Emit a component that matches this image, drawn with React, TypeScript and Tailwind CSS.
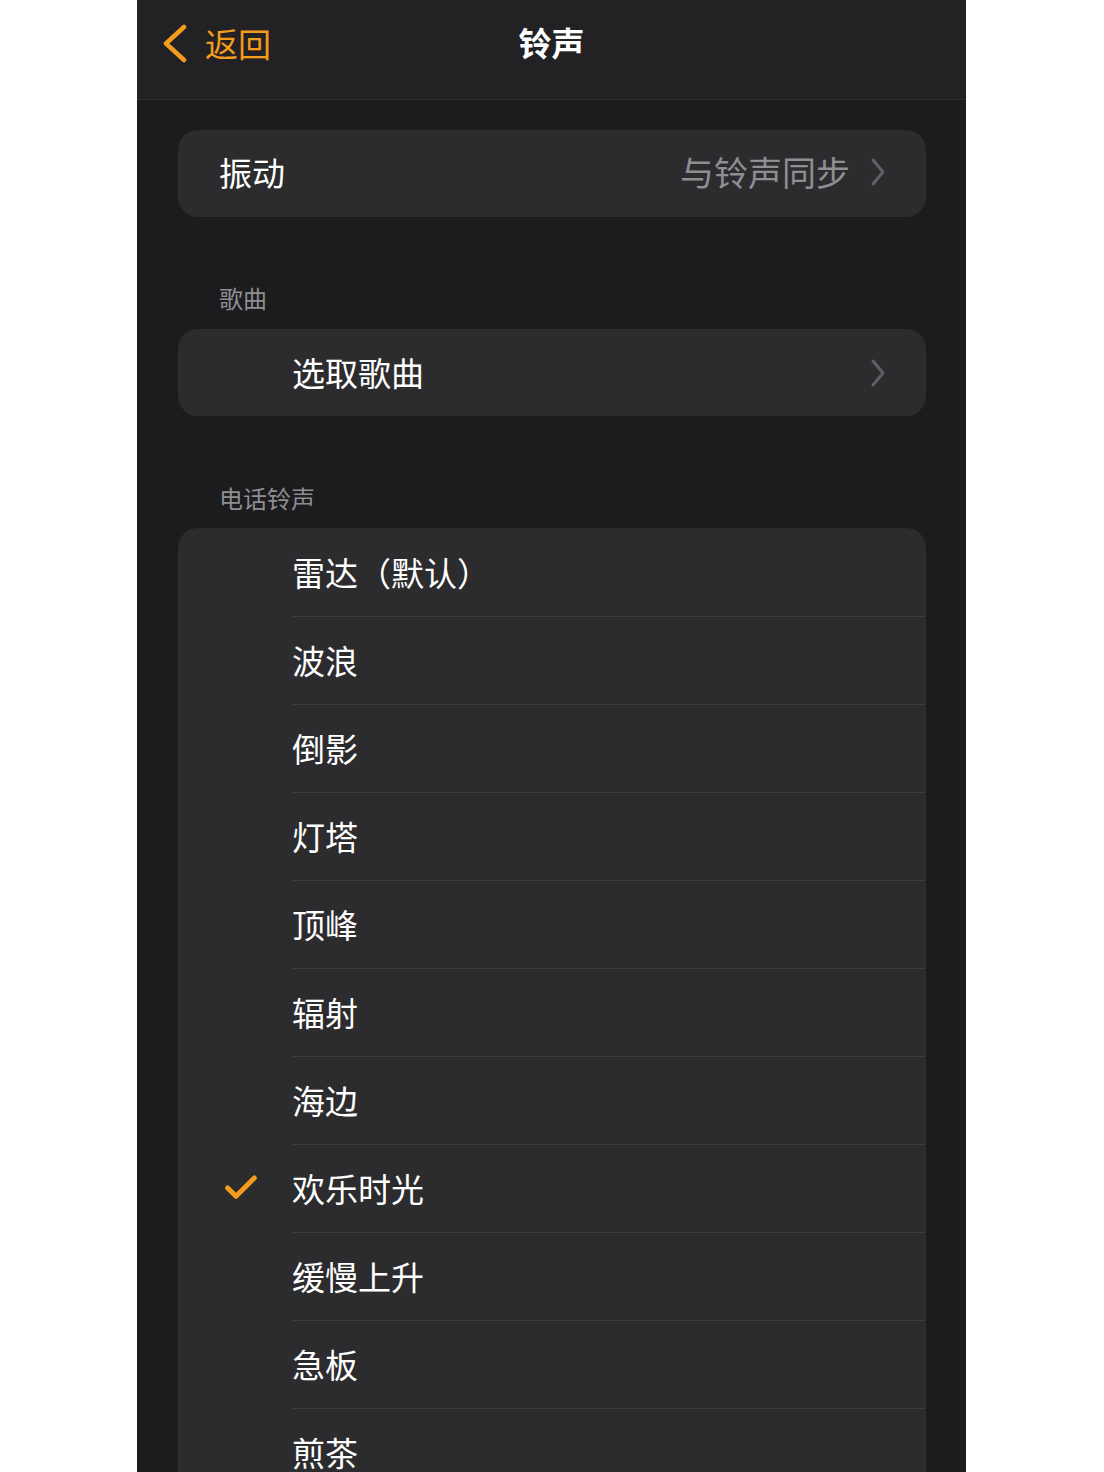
import { Check } from 'lucide-react';

const ringtones = ['雷达（默认）', '波浪', '倒影', '灯塔', '顶峰', '辐射', '海边', '欢乐时光', '缓慢上升', '急板', '煎茶'];
const selected = '欢乐时光';

const font = { fontFamily: '"Noto Sans CJK SC", "Noto Sans", sans-serif' };

function Disclosure() {
  return (
    <svg width="16" height="30" viewBox="0 0 16 30" fill="none" className="shrink-0">
      <polyline points="3,3 13,15 3,27" stroke="#5f5f64" strokeWidth="3" strokeLinecap="round" strokeLinejoin="round" />
    </svg>
  );
}

export default function App() {
  return (
    <div className="w-full h-[1472px] bg-white flex overflow-hidden" style={font}>
      <div className="w-[829px] ml-[137px] h-full bg-[#1c1c1e] flex flex-col">
        {/* Nav bar */}
        <header className="h-[100px] shrink-0 bg-[#222224] border-b border-[#2e2e30] relative flex items-start">
          <div className="flex items-center pl-[24px] pt-[22px] text-[#f39c1d]">
            <svg width="28" height="40" viewBox="0 0 28 40" fill="none">
              <polyline points="23,4 5,20.5 23,37" stroke="#f39c1d" strokeWidth="4.5" strokeLinecap="round" strokeLinejoin="round" />
            </svg>
            <span className="text-[33px] leading-[42px] ml-[16px]">返回</span>
          </div>
          <h1 className="absolute left-0 right-0 top-[20px] text-center text-white text-[33px] leading-[44px] font-bold">铃声</h1>
        </header>

        <main className="pl-[41px] pr-[40px] pt-[30px] flex flex-col">
          {/* Vibration */}
          <div className="h-[87px] bg-[#2c2c2e] rounded-[20px] flex items-center pl-[41px] pr-[40px] pb-[3px]">
            <span className="text-white text-[33px] leading-none">振动</span>
            <span className="ml-auto text-[#8e8e93] text-[34px] leading-none">与铃声同步</span>
            <span className="ml-[20px]"><Disclosure /></span>
          </div>

          {/* Songs */}
          <div className="mt-[65px] pl-[41px] text-[#8e8e93] text-[24px] leading-[32px]">歌曲</div>
          <div className="mt-[15px] h-[87px] bg-[#2c2c2e] rounded-[20px] flex items-center pl-[114px] pr-[40px]">
            <span className="text-white text-[33px] leading-none">选取歌曲</span>
            <span className="ml-auto"><Disclosure /></span>
          </div>

          {/* Ringtones */}
          <div className="mt-[66px] pl-[41px] text-[#8e8e93] text-[24px] leading-[32px]">电话铃声</div>
          <div className="mt-[14px] bg-[#2c2c2e] rounded-t-[20px] flex flex-col">
            {ringtones.map((name, i) => (
              <div key={name} className="h-[88px] flex items-stretch">
                <div className="w-[114px] shrink-0 flex items-center justify-center pl-[12px]">
                  {name === selected && <Check size={40} strokeWidth={3} className="text-[#f39c1d]" />}
                </div>
                <div className={`flex-1 flex items-center ${i > 0 ? 'border-t border-[#3d3d40]' : ''}`}>
                  <span className="text-white text-[33px] leading-none">{name}</span>
                </div>
              </div>
            ))}
          </div>
        </main>
      </div>
    </div>
  );
}
